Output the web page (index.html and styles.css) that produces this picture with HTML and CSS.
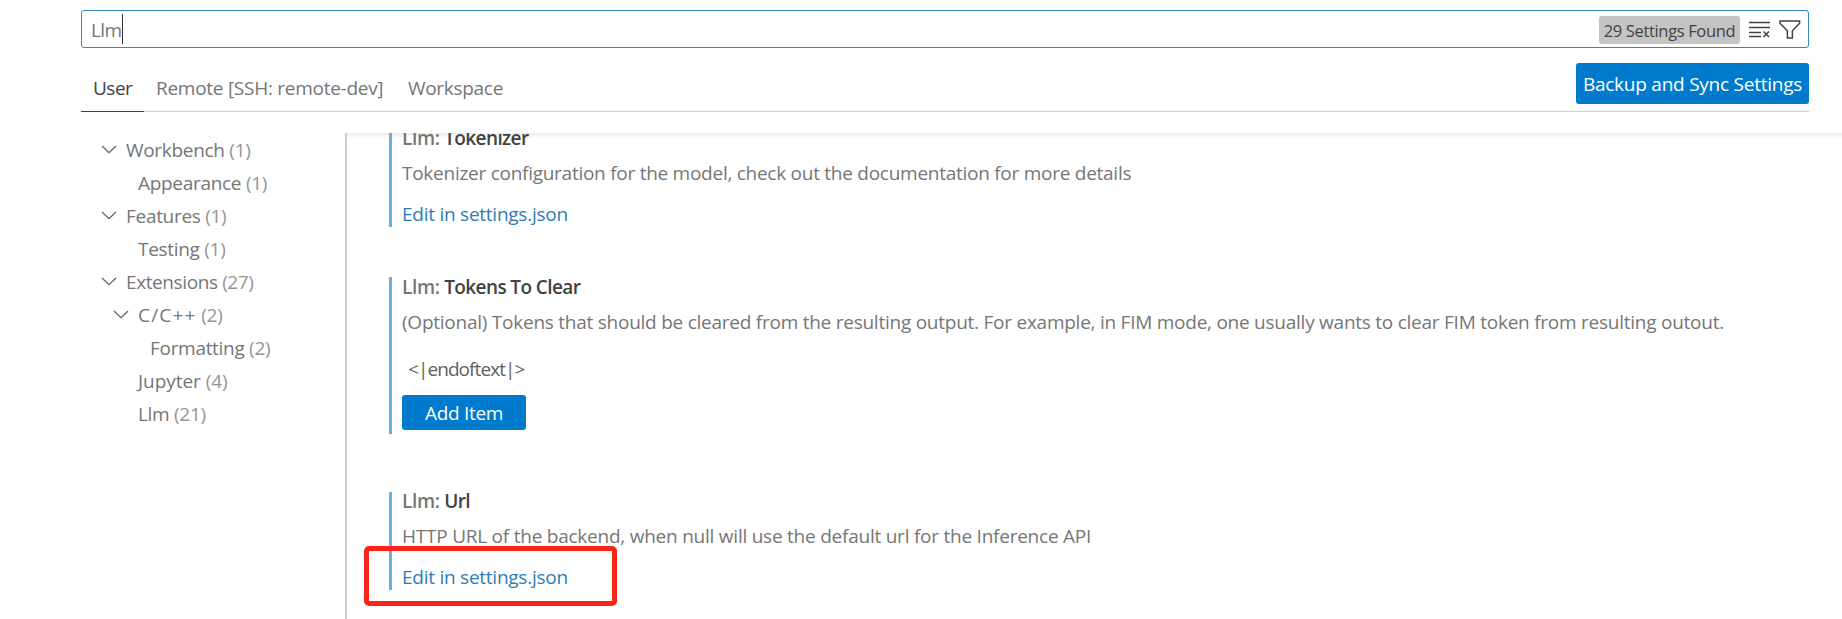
FILE: index.html
```html
<!DOCTYPE html>
<html lang="en">
<head>
<meta charset="utf-8">
<title>Settings</title>
<link rel="stylesheet" href="styles.css">
</head>
<body>
<div class="settings">
  <header class="header">
    <div class="search">
      <span class="query">Llm</span><span class="caret"></span>
      <span class="count"><span class="count-text">29 Settings Found</span></span>
      <svg class="icon clear" width="22" height="18" viewBox="0 0 22 18"><path d="M0 1.5H21M0 6.5H21M0 11.5H12M0 15.5H12M14.5 10.5L20 16M20 10.5L14.5 16"/></svg>
      <svg class="icon filter" width="22" height="20" viewBox="0 0 22 20"><path d="M1 1H20.6V3.2L13.4 10.8V18H8.4V10.8L1 3.2Z"/></svg>
    </div>
    <nav class="tabs">
      <a class="tab active">User</a>
      <a class="tab remote">Remote [SSH: remote-dev]</a>
      <a class="tab workspace">Workspace</a>
      <button class="button sync">Backup and Sync Settings</button>
    </nav>
  </header>
  <div class="body">
    <aside class="toc">
      <div class="row"><svg class="chev" width="16" height="9" viewBox="0 0 16 9"><path d="M1 1L8 7.6L15 1"/></svg><span>Workbench <i>(1)</i></span></div>
      <div class="row leaf"><span>Appearance <i>(1)</i></span></div>
      <div class="row"><svg class="chev" width="16" height="9" viewBox="0 0 16 9"><path d="M1 1L8 7.6L15 1"/></svg><span>Features <i>(1)</i></span></div>
      <div class="row leaf"><span>Testing <i>(1)</i></span></div>
      <div class="row"><svg class="chev" width="16" height="9" viewBox="0 0 16 9"><path d="M1 1L8 7.6L15 1"/></svg><span class="ext">Extensions <i>(27)</i></span></div>
      <div class="row nested"><svg class="chev" width="16" height="9" viewBox="0 0 16 9"><path d="M1 1L8 7.6L15 1"/></svg><span><span class="cpp">C/C++</span> <i>(2)</i></span></div>
      <div class="row deep"><span>Formatting <i>(2)</i></span></div>
      <div class="row leaf"><span class="jup">Jupyter <i>(4)</i></span></div>
      <div class="row leaf"><span>Llm <i>(21)</i></span></div>
    </aside>
    <main class="list">
      <section class="item first">
        <h3 class="title"><span class="cat">Llm: </span><b>Tokenizer</b></h3>
        <p class="desc d1">Tokenizer configuration for the model, check out the documentation for more details</p>
        <a class="link">Edit in settings.json</a>
      </section>
      <section class="item second">
        <h3 class="title"><span class="cat">Llm: </span><b>Tokens To Clear</b></h3>
        <p class="desc d2">(Optional) Tokens that should be cleared from the resulting output. For example, in FIM mode, one usually wants to clear FIM token from resulting outout.</p>
        <div class="value">&lt;|endoftext|&gt;</div>
        <button class="button add">Add Item</button>
      </section>
      <section class="item third">
        <h3 class="title"><span class="cat">Llm: </span><b>Url</b></h3>
        <p class="desc d3">HTTP URL of the backend, when null will use the default url for the Inference API</p>
        <a class="link">Edit in settings.json</a>
        <div class="highlight"></div>
      </section>
    </main>
  </div>
</div>
</body>
</html>
```
FILE: styles.css
```css
* { box-sizing: border-box; }
body {
  margin: 0;
  background: #fff;
  color: #767676;
  font-family: "Open Sans", "Noto Sans", sans-serif;
  font-size: 19px;
  line-height: 26px;
  letter-spacing: -0.3px;
  white-space: nowrap;
}
.settings { height: 619px; display: flex; flex-direction: column; overflow: hidden; }
.header { height: 133px; padding: 10px 33px 0 81px; flex: none; }
.search {
  height: 38px;
  border: 1px solid #2f86c1;
  border-radius: 3px;
  display: flex;
  align-items: center;
  padding: 0 7px 0 9px;
}
.query { padding-top: 2px; letter-spacing: -0.6px; }
.caret { width: 1px; height: 30px; background: #333; }
.count {
  margin: 2px 0 0 auto;
  width: 141px;
  height: 28px;
  border-radius: 3px;
  background: #c4c4c4;
  color: #424242;
  font-size: 16.5px;
  display: flex;
  align-items: center;
  justify-content: center;
}
.count-text { padding-top: 2px; letter-spacing: -0.35px; }
.icon { fill: none; stroke: #424242; stroke-width: 1.5; }
.clear { margin: 2px 0 0 9px; }
.filter { margin: 1px 0 0 8px; }
.tabs { height: 64px; display: flex; border-bottom: 1px solid #cecece; }
.tab { height: 64px; padding: 27px 12px 0; }
.active { width: 63px; color: #424242; border-bottom: 1px solid #424242; letter-spacing: -0.5px; }
.remote { width: 252px; letter-spacing: -0.27px; }
.button {
  border: 0;
  border-radius: 3px;
  background: #007acc;
  color: #fff;
  font: inherit;
  letter-spacing: inherit;
  padding: 0;
  display: flex;
  align-items: center;
  justify-content: center;
}
.sync { margin: 15px 0 0 auto; width: 233px; height: 41px; letter-spacing: -0.24px; }
.body { flex: 1; display: flex; }
.toc { width: 345px; padding: 0 0 0 101px; }
.row { height: 33px; display: flex; align-items: center; }
.row i { font-style: normal; color: #959595; }
.ext { letter-spacing: -0.4px; }
.cpp { letter-spacing: 1.2px; }
.jup { letter-spacing: -0.05px; }
.chev { fill: none; stroke: #646464; stroke-width: 1.3; margin-right: 9px; }
.nested { padding-left: 12px; }
.leaf { padding-left: 37px; }
.deep { padding-left: 49px; }
.list {
  flex: 1;
  border-left: 2px solid #cecece;
  background: linear-gradient(#ececec, #fff) no-repeat 0 0 / 100% 6px;
  padding-left: 42px;
  overflow: hidden;
}
.item { display: flow-root; border-left: 3px solid #66afdf; padding-left: 10px; position: relative; }
.title { margin: 0; font-size: inherit; font-weight: 600; height: 26px; }
.title b { font-weight: 600; color: #424242; letter-spacing: -0.6px; }
.cat { letter-spacing: -0.35px; }
.desc { margin: 9px 0 0; }
.d1 { letter-spacing: -0.264px; }
.d2 { letter-spacing: -0.247px; }
.d3 { letter-spacing: -0.235px; }
.link { display: block; margin-top: 15px; color: #2f7cb5; letter-spacing: -0.25px; }
.first { height: 94px; }
.first .title { margin-top: -8px; }
.second { margin-top: 50px; height: 157px; }
.second .title, .third .title { margin-top: -3px; }
.value { margin: 21px 0 0 6px; color: #616161; letter-spacing: -0.93px; }
.add { width: 124px; height: 35px; margin-top: 13px; }
.third { margin-top: 58px; height: 98px; }
.third .title { margin-top: -4px; }
.highlight {
  position: absolute;
  left: -28px;
  top: 54px;
  width: 253px;
  height: 60px;
  border: 5px solid #fb2318;
  border-radius: 5px;
}
```
